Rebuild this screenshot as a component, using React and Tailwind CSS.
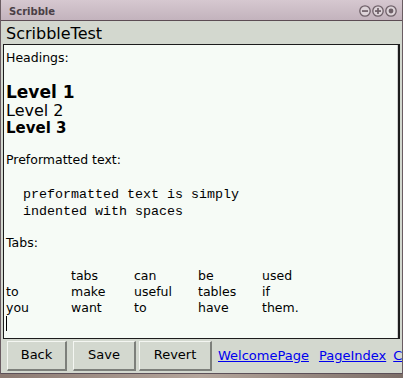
import React from "react";

const sans = { fontFamily: '"DejaVu Sans", "Liberation Sans", sans-serif' };

function TitleButton({ kind }) {
  return (
    <svg width="12" height="12" viewBox="0 0 12 12">
      <circle cx="6" cy="6" r="5.2" fill="#ddd4d9" stroke="#6e6068" strokeWidth="1.3" />
      {kind === "min" && <rect x="3" y="5.2" width="6" height="1.7" fill="#6e6068" />}
      {kind === "max" && (
        <>
          <rect x="3" y="5.2" width="6" height="1.7" fill="#6e6068" />
          <rect x="5.15" y="3" width="1.7" height="6" fill="#6e6068" />
        </>
      )}
      {kind === "close" && <circle cx="6" cy="6" r="2.4" fill="#6e6068" />}
    </svg>
  );
}

function Btn({ children, w }) {
  return (
    <button
      className={`${w} shrink-0 h-[30px] bg-[#d3d8cf] border-t border-l border-t-[#f4f6f2] border-l-[#f4f6f2] border-r-2 border-b-2 border-r-[#7c7f7a] border-b-[#7c7f7a] text-[13px] text-black`}
      style={sans}
    >
      {children}
    </button>
  );
}

const tabRows = [
  ["", "tabs", "can", "be", "used"],
  ["to", "make", "useful", "tables", "if"],
  ["you", "want", "to", "have", "them."],
];

export default function App() {
  return (
    <div className="w-[403px] h-[378px] overflow-hidden bg-gradient-to-r from-[#8c7a72] via-[#b5a69c] to-[#7d6e68] flex flex-col" style={sans}>
      <div className="flex flex-col bg-[#d3d8cf] border-l border-r border-[#6a5c62]">
        {/* title bar */}
        <div className="h-[21px] flex items-center justify-between pl-[8px] pr-[5px] bg-gradient-to-b from-[#d6c8d0] to-[#c3b3bd] border-b border-[#5c4c54]">
          <span className="text-[10px] font-bold text-[#4a3f46] mt-[2px]">Scribble</span>
          <div className="flex gap-[1px] mt-[2px]">
            <TitleButton kind="min" />
            <TitleButton kind="max" />
            <TitleButton kind="close" />
          </div>
        </div>

        {/* page name */}
        <div className="h-[23px] pl-[5px] pt-[2px] text-[16px] leading-[22px] text-black">ScribbleTest</div>

        {/* editor */}
        <div className="mx-[2px] h-[295px] border border-[#1c1c1c] border-r-2 bg-[#f6fbf6] text-black text-[12.5px] overflow-hidden">
          <div className="h-full border-r border-[#d0d0d0] pl-[2px] pt-[5px]">
            <div className="h-[16px] leading-[16px]">Headings:</div>
            <div className="h-[17px]" />
            <div className="h-[19px] leading-[19px] text-[17px] font-bold">Level 1</div>
            <div className="h-[18px] leading-[18px] text-[16px]">Level 2</div>
            <div className="h-[16px] leading-[16px] text-[15px] font-semibold">Level 3</div>
            <div className="h-[16px]" />
            <div className="h-[16px] leading-[16px]">Preformatted text:</div>
            <div className="h-[18px]" />
            <div
              className="text-[13.33px] leading-[17px] whitespace-pre pl-[1px]"
              style={{ fontFamily: '"Liberation Mono", "DejaVu Sans Mono", monospace' }}
            >
              <div className="h-[17px]">  preformatted text is simply</div>
              <div className="h-[17px]">  indented with spaces</div>
            </div>
            <div className="h-[15px]" />
            <div className="h-[16px] leading-[16px]">Tabs:</div>
            <div className="h-[17px]" />
            {tabRows.map((r, i) => (
              <div key={i} className="grid grid-cols-[65px_63px_64px_64px_1fr] h-[16px] leading-[16px]">
                {r.map((c, j) => (
                  <span key={j}>{c}</span>
                ))}
              </div>
            ))}
            <div className="w-[1px] h-[15px] bg-black" />
          </div>
        </div>

        {/* buttons */}
        <div className="h-[33px] flex items-center pl-[6px] gap-[5px] whitespace-nowrap overflow-hidden">
          <Btn w="w-[60px]">Back</Btn>
          <Btn w="w-[63px] ml-[1px]">Save</Btn>
          <Btn w="w-[73px] ml-[-2px]">Revert</Btn>
          <a href="#" className="ml-[1px] text-[13px] text-[#0000ee] underline">WelcomePage</a>
          <a href="#" className="ml-[5px] text-[13px] text-[#0000ee] underline">PageIndex</a>
          <a href="#" className="ml-[2px] text-[13px] text-[#0000ee] underline">Changes</a>
        </div>
        <div className="h-[2px] border-b border-[#5c5058]" />
      </div>
    </div>
  );
}
